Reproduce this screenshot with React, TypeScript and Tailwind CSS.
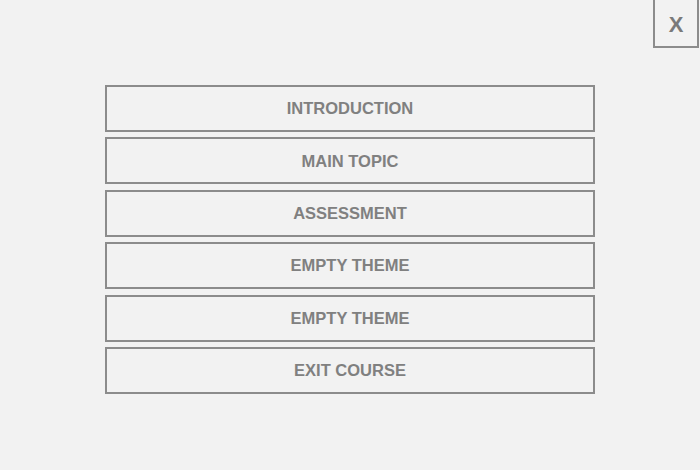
import React from "react";

const items = ["INTRODUCTION", "MAIN TOPIC", "ASSESSMENT", "EMPTY THEME", "EMPTY THEME", "EXIT COURSE"];

export default function App() {
  return (
    <div className="relative w-[700px] h-[470px] bg-[#f2f2f2] font-['Liberation_Sans',Arial,sans-serif] overflow-hidden">
      <button className="absolute right-[1px] top-[-2px] w-[46px] h-[50px] border-2 border-[#8c8c8c] flex items-center justify-center pt-[2px] text-[22px] font-bold text-[#7a7a7a]">
        X
      </button>
      <div className="pt-[85px] flex flex-col items-center gap-[5.4px]">
        {items.map((label, i) => (
          <button
            key={i}
            className="w-[490px] h-[47px] border-2 border-[#8c8c8c] flex items-center justify-center text-[16.5px] font-bold text-[#808080]"
          >
            {label}
          </button>
        ))}
      </div>
    </div>
  );
}
